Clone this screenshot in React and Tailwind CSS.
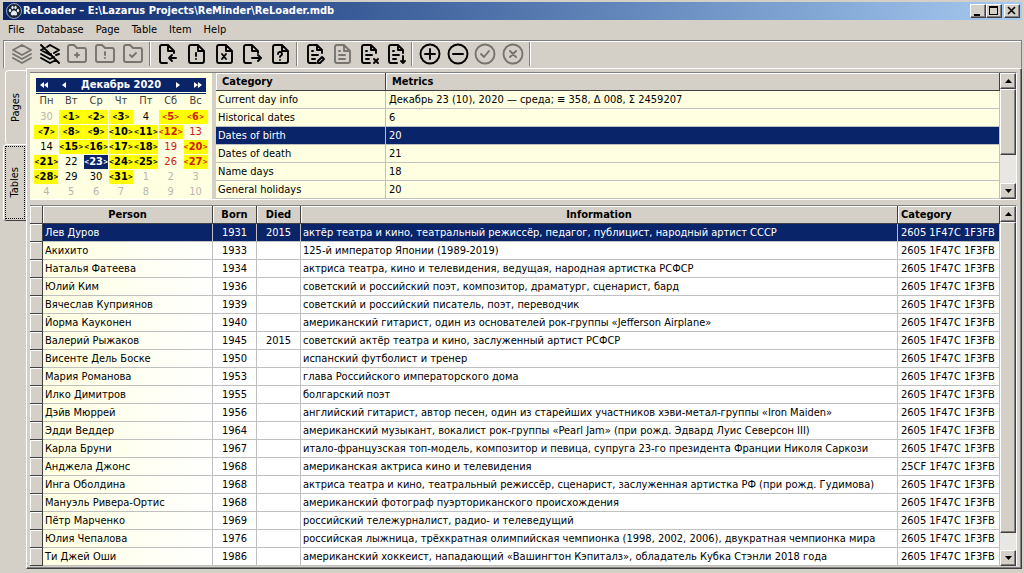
import React from 'react';
import clsx from 'clsx';

const WEEK_DAYS = ['Пн', 'Вт', 'Ср', 'Чт', 'Пт', 'Сб', 'Вс'];

// m = day has marked events, o = day belongs to another month
const WEEKS = [
  ['30o', '1m', '2m', '3m', '4', '5m', '6m'],
  ['7m', '8m', '9m', '10m', '11m', '12m', '13'],
  ['14', '15m', '16m', '17m', '18m', '19', '20m'],
  ['21m', '22', '23m', '24m', '25m', '26', '27m'],
  ['28m', '29', '30', '31m', '1o', '2o', '3o'],
  ['4o', '5o', '6o', '7o', '8o', '9o', '10o'],
];

const METRICS = [
  ['Current day info', 'Декабрь 23 (10), 2020 — среда; ≡ 358, Δ 008, Σ 2459207'],
  ['Historical dates', '6'],
  ['Dates of birth', '20'],
  ['Dates of death', '21'],
  ['Name days', '18'],
  ['General holidays', '20'],
];

const PEOPLE = [
  ['Лев Дуров', '1931', '2015', 'актёр театра и кино, театральный режиссёр, педагог, публицист, народный артист СССР'],
  ['Акихито', '1933', '', '125-й император Японии (1989-2019)'],
  ['Наталья Фатеева', '1934', '', 'актриса театра, кино и телевидения, ведущая, народная артистка РСФСР'],
  ['Юлий Ким', '1936', '', 'советский и российский поэт, композитор, драматург, сценарист, бард'],
  ['Вячеслав Куприянов', '1939', '', 'советский и российский писатель, поэт, переводчик'],
  ['Йорма Кауконен', '1940', '', 'американский гитарист, один из основателей рок-группы «Jefferson Airplane»'],
  ['Валерий Рыжаков', '1945', '2015', 'советский актёр театра и кино, заслуженный артист РСФСР'],
  ['Висенте Дель Боске', '1950', '', 'испанский футболист и тренер'],
  ['Мария Романова', '1953', '', 'глава Российского императорского дома'],
  ['Илко Димитров', '1955', '', 'болгарский поэт'],
  ['Дэйв Мюррей', '1956', '', 'английский гитарист, автор песен, один из старейших участников хэви-метал-группы «Iron Maiden»'],
  ['Эдди Веддер', '1964', '', 'американский музыкант, вокалист рок-группы «Pearl Jam» (при рожд. Эдвард Луис Северсон III)'],
  ['Карла Бруни', '1967', '', 'итало-французская топ-модель, композитор и певица, супруга 23-го президента Франции Николя Саркози'],
  ['Анджела Джонс', '1968', '', 'американская актриса кино и телевидения', '25CF 1F47C 1F3FB'],
  ['Инга Оболдина', '1968', '', 'актриса театра и кино, театральный режиссёр, сценарист, заслуженная артистка РФ (при рожд. Гудимова)'],
  ['Мануэль Ривера-Ортис', '1968', '', 'американский фотограф пуэрториканского происхождения'],
  ['Пётр Марченко', '1969', '', 'российский тележурналист, радио- и телеведущий'],
  ['Юлия Чепалова', '1976', '', 'российская лыжница, трёхкратная олимпийская чемпионка (1998, 2002, 2006), двукратная чемпионка мира'],
  ['Ти Джей Оши', '1986', '', 'американский хоккеист, нападающий «Вашингтон Кэпиталз», обладатель Кубка Стэнли 2018 года'],
];

const FOLDER = 'M5 3h4l3 3h7a2 2 0 0 1 2 2v10a2 2 0 0 1-2 2H5a2 2 0 0 1-2-2V5a2 2 0 0 1 2-2z';
const FILE = 'M14 3H7a2 2 0 0 0-2 2v14a2 2 0 0 0 2 2h11a2 2 0 0 0 2-2V9zM14 3v6h6';
const FILE_OPEN = 'M18 11V9l-6-6H6a2 2 0 0 0-2 2v14a2 2 0 0 0 2 2h5M12 3v6h6';
const FILE_LINES = 'M19 11V8l-5-5H7a2 2 0 0 0-2 2v14a2 2 0 0 0 2 2h6M14 3v5h5M9 9h1M9 13h6M9 17h3';
const CIRCLE = 'M12 2.500a9.500 9.500 0 1 0 0 19 9.500 9.500 0 1 0 0-19z';

const TOOL_GROUPS = [
  [
    { name: 'Open database', off: true, d: 'M12 3 3 8l9 5 9-5zM3 12l9 5 9-5M3 16l9 5 9-5' },
    { name: 'Close database', d: 'M9 5l3-2 9 5-5 3M7 6 3 8l9 5 1-1M3 12l9 5 4-2M18 13l3-1M3 16l9 5 6-3M3 3l18 18' },
    { name: 'Add page', off: true, d: FOLDER + 'M12 11v4M10 13h4' },
    { name: 'Page properties', off: true, d: FOLDER + 'M12 10v3M12 16v.1' },
    { name: 'Apply page', off: true, d: FOLDER + 'M9 13l2 2 4-4' },
  ],
  [
    { name: 'Import table', d: FILE_OPEN + 'M20 16h-7M16 13l-3 3 3 3' },
    { name: 'Table properties', d: FILE + 'M12 11v3M12 17v.1' },
    { name: 'Delete table', d: FILE + 'M10 12l4 5M14 12l-4 5' },
    { name: 'Export table', d: FILE_OPEN + 'M12 16h8M18 13l3 3-3 3' },
    { name: 'Query table', d: FILE + 'M10 12a2 2 0 1 1 3 1.700q-1 .500-1 1.300M12 18v.1' },
  ],
  [
    { name: 'Edit item', d: FILE_LINES + 'M15 19l4-4 2 2-4 4h-2z' },
    { name: 'View item', off: true, d: FILE + 'M9 9h1M9 13h6M9 17h6' },
    { name: 'Remove item', d: FILE_LINES + 'M17 17l4 4M21 17l-4 4' },
    { name: 'Save item', d: FILE_LINES + 'M19 14v7M17 19l2 2 2-2' },
  ],
  [
    { name: 'Insert', d: CIRCLE + 'M12 7v10M7 12h10' },
    { name: 'Delete', d: CIRCLE + 'M7 12h10' },
    { name: 'Post', off: true, d: CIRCLE + 'M8 12l3 3 5-6' },
    { name: 'Cancel', off: true, d: CIRCLE + 'M9 9l6 6M15 9l-6 6' },
  ],
];

const RAISED = 'border border-t-white border-l-white border-r-[#404040] border-b-[#404040] bg-[#d4d0c8] shadow-[inset_-1px_-1px_0_#808080]';
const HEAD = 'h-[18px] border-r border-b border-[#404040] bg-[#d4d0c8] py-0 leading-4 font-bold shadow-[inset_1px_1px_0_#fff]';
const CELL = 'h-[18px] border-r border-b border-[#c0c0c0] py-0 leading-4 whitespace-nowrap';

const ToolButton = ({ tool }) => (
  <button type="button" aria-label={tool.name} disabled={tool.off} className={clsx('flex flex-1 items-center justify-center', tool.off ? 'text-[#77756f]' : 'text-black')}>
    <svg viewBox="0 0 24 24" className="size-6" fill="none" stroke="currentColor" strokeWidth="1.900" strokeLinecap="round" strokeLinejoin="round">
      <path d={tool.d} />
    </svg>
  </button>
);

const TitleBar = () => (
  <header className="flex h-[18px] items-center gap-px bg-linear-to-r from-[#0a246a] to-[#a6caf0] pr-0.5 pl-[3px]">
    <svg viewBox="0 0 16 16" className="size-4">
      <circle cx="8" cy="8" r="7.500" fill="#1b2430" stroke="#8fa3c4" />
      <g fill="#e8edf5">
        <ellipse cx="4" cy="7.500" rx="1.200" ry="1.700" />
        <ellipse cx="6.500" cy="4.500" rx="1.200" ry="1.800" />
        <ellipse cx="9.500" cy="4.500" rx="1.200" ry="1.800" />
        <ellipse cx="12" cy="7.500" rx="1.200" ry="1.700" />
        <path d="M8 7.500c2 0 3.500 2.500 3 4s-2 .700-3 .700-2.500.800-3-.700 1-4 3-4z" />
      </g>
    </svg>
    <h1 className="flex-1 text-[11px] leading-4 font-bold text-white">ReLoader – E:\Lazarus Projects\ReMinder\ReLoader.mdb</h1>
    <div className="flex">
      <button type="button" aria-label="Minimize" className={clsx(RAISED, 'h-3.5 w-4')}>
        <svg viewBox="0 0 14 12" className="h-3 w-3.5"><path d="M3 9h6v2H3z" /></svg>
      </button>
      <button type="button" aria-label="Maximize" className={clsx(RAISED, 'h-3.5 w-4')}>
        <svg viewBox="0 0 14 12" className="h-3 w-3.5"><path fillRule="evenodd" d="M2 1h9v9H2zM3 3v6h7V3z" /></svg>
      </button>
      <button type="button" aria-label="Close" className={clsx(RAISED, 'ml-0.5 h-3.5 w-4')}>
        <svg viewBox="0 0 14 12" className="h-3 w-3.5"><path d="M3 2l7 7M10 2l-7 7" stroke="#000" strokeWidth="1.600" /></svg>
      </button>
    </div>
  </header>
);

const ScrollBar = ({ label, thumb }) => (
  <div className="flex w-4 shrink-0 flex-col bg-[#e9e7e3]">
    <button type="button" aria-label={`${label}: scroll up`} className={clsx(RAISED, 'flex h-4 items-center justify-center')}>
      <svg viewBox="0 0 7 4" className="h-1 w-[7px]"><path d="M3.500 0 7 4H0z" /></svg>
    </button>
    <div className="flex flex-1 flex-col">
      <div className={clsx(RAISED, thumb)} />
    </div>
    <button type="button" aria-label={`${label}: scroll down`} className={clsx(RAISED, 'flex h-4 items-center justify-center')}>
      <svg viewBox="0 0 7 4" className="h-1 w-[7px]"><path d="M0 0h7L3.500 4z" /></svg>
    </button>
  </div>
);

const Day = ({ code, weekend }) => {
  const day = parseInt(code, 10);
  const marked = code.endsWith('m');
  const other = code.endsWith('o');
  const selected = day === 23;
  return (
    <td className="h-[15px] p-0">
      <button
        type="button"
        className={clsx(
          'mx-auto flex h-3.5 w-6 items-center justify-center leading-3',
          marked && 'font-bold',
          marked && (selected ? 'bg-[#0a246a]' : 'bg-[#ffff00]'),
          selected ? 'text-white' : other ? 'text-[#b8b8b0]' : weekend ? 'text-[#d02010]' : 'text-black'
        )}
      >
        {marked && <span className="text-[7px]">&lt;</span>}
        {day}
        {marked && <span className="text-[7px]">&gt;</span>}
      </button>
    </td>
  );
};

const Calendar = () => (
  <section className="w-[182px] shrink-0 bg-[#ffffe1] px-1 pt-[5px]">
    <div className="mx-0.5 flex h-3.5 items-center justify-between bg-[#0a246a] px-1 text-white">
      <button type="button" aria-label="Previous year"><svg viewBox="0 0 8 6" className="h-1.5 w-2 fill-white"><path d="M4 0v6L0 3zM8 0v6L4 3z" /></svg></button>
      <button type="button" aria-label="Previous month"><svg viewBox="0 0 4 6" className="h-1.5 w-1 fill-white"><path d="M4 0v6L0 3z" /></svg></button>
      <h2 className="text-[11px] leading-3.5 font-bold">Декабрь 2020</h2>
      <button type="button" aria-label="Next month"><svg viewBox="0 0 4 6" className="h-1.5 w-1 fill-white"><path d="M0 0v6l4-3z" /></svg></button>
      <button type="button" aria-label="Next year"><svg viewBox="0 0 8 6" className="h-1.5 w-2 fill-white"><path d="M0 0v6l4-3zM4 0v6l4-3z" /></svg></button>
    </div>
    <div className="mx-0.5 mt-px h-px bg-[#0a246a]" />
    <table className="w-full table-fixed border-separate border-spacing-0 text-center">
      <thead>
        <tr>
          {WEEK_DAYS.map(d => <th key={d} className="h-[15px] p-0 align-top leading-3.5 font-normal text-[#404040]">{d}</th>)}
        </tr>
      </thead>
      <tbody>
        {WEEKS.map((week, i) => (
          <tr key={i}>
            {week.map((code, j) => <Day key={code} code={code} weekend={j > 4} />)}
          </tr>
        ))}
      </tbody>
    </table>
  </section>
);

const MetricsTable = () => (
  <table className="w-full table-fixed border-separate border-spacing-0 bg-[#ffffe1]">
    <colgroup>
      <col className="w-[170px]" />
      <col />
    </colgroup>
    <thead>
      <tr className="text-left">
        <th className={clsx(HEAD, 'px-1.5')}>Category</th>
        <th className={clsx(HEAD, 'px-1.5')}>Metrics</th>
      </tr>
    </thead>
    <tbody>
      {METRICS.map(([name, value], i) => (
        <tr key={name} className={clsx(i === 2 && 'bg-[#0a246a] text-white')}>
          <td className={clsx(CELL, 'px-0.5')}>{name}</td>
          <td className={clsx(CELL, 'px-[3px]')}>{value}</td>
        </tr>
      ))}
    </tbody>
  </table>
);

const PeopleTable = () => (
  <table className="w-full table-fixed border-separate border-spacing-0 bg-white">
    <colgroup>
      <col className="w-[13px]" />
      <col className="w-[170px]" />
      <col className="w-11" />
      <col className="w-11" />
      <col />
      <col className="w-[102px]" />
    </colgroup>
    <thead>
      <tr>
        <th className={HEAD} aria-label="Row marker" />
        <th className={HEAD}>Person</th>
        <th className={HEAD}>Born</th>
        <th className={HEAD}>Died</th>
        <th className={HEAD}>Information</th>
        <th className={clsx(HEAD, 'px-[3px] text-left')}>Category</th>
      </tr>
    </thead>
    <tbody>
      {PEOPLE.map(([name, born, died, info, code = '2605 1F47C 1F3FB'], i) => (
        <tr key={name} className={clsx(i === 0 && 'bg-[#0a246a] text-white')}>
          <td className={HEAD} />
          <td className={clsx(CELL, 'px-0.5', i > 0 && 'bg-linear-to-r from-[#ffffe1] to-white')}>{name}</td>
          <td className={clsx(CELL, 'text-center')}>{born}</td>
          <td className={clsx(CELL, 'text-center')}>{died}</td>
          <td className={clsx(CELL, 'overflow-hidden px-0.5')}>{info}</td>
          <td className={clsx(CELL, 'px-[3px]')}>{code}</td>
        </tr>
      ))}
    </tbody>
  </table>
);

const TAB = 'flex items-center justify-center rounded-l-sm border-t border-l border-white';
const GROUP_WIDTHS = ['w-[146px]', 'w-[147px]', 'w-[115px]', 'w-[118px]'];

const App = () => (
  <div className="flex min-h-screen flex-col border-b border-[#808080] bg-[#d4d0c8] pt-0.5 pr-0.5 pl-[3px] font-['DejaVu_Sans_Condensed','DejaVu_Sans',sans-serif] text-[11px] text-black">
    <TitleBar />
    <nav className="flex h-5 items-center gap-3 px-[5px] leading-4">
      {['File', 'Database', 'Page', 'Table', 'Item', 'Help'].map(item => (
        <button key={item} type="button">{item}</button>
      ))}
    </nav>
    <div role="toolbar" className="flex h-7 items-start border-t border-r border-l border-[#808080] pt-px shadow-[inset_1px_1px_0_#fff]">
      {TOOL_GROUPS.map((group, i) => (
        <div key={i} className={clsx('flex h-6 items-center border-r border-[#808080] pr-0.5 pl-1 shadow-[1px_0_0_#fff]', GROUP_WIDTHS[i])}>
          {group.map(tool => <ToolButton key={tool.name} tool={tool} />)}
        </div>
      ))}
    </div>

    <div className="flex flex-1 pb-1">
      <div role="tablist" className="flex w-[23px] shrink-0 flex-col pt-0.5">
        <button type="button" role="tab" aria-selected="false" className={clsx(TAB, 'ml-0.5 h-[74px]')}>
          <span className="rotate-180 [writing-mode:vertical-rl]">Pages</span>
        </button>
        <button type="button" role="tab" aria-selected="true" className={clsx(TAB, 'h-[77px] border-b border-b-[#404040] p-px')}>
          <span className="flex size-full items-center justify-center border border-dotted border-black">
            <span className="rotate-180 [writing-mode:vertical-rl]">Tables</span>
          </span>
        </button>
      </div>

      <main className="flex min-w-0 flex-1 flex-col gap-[5px] border border-t-white border-r-[#404040] border-b-[#404040] border-l-white pt-[3px] pr-1 pb-0.5 pl-[3px] shadow-[inset_-1px_-1px_0_#808080]">
        <div className="flex gap-1 border-t border-r border-b border-t-[#808080] border-r-white border-b-white">
          <Calendar />
          <div className="flex min-w-0 flex-1">
            <div className="min-w-0 flex-1"><MetricsTable /></div>
            <ScrollBar label="Metrics" thumb="h-[66px]" />
          </div>
        </div>
        <div className="flex flex-1 border-t border-r border-t-[#808080] border-r-white">
          <div className="min-w-0 flex-1"><PeopleTable /></div>
          <ScrollBar label="People" thumb="h-[311px]" />
        </div>
      </main>
    </div>
  </div>
);

export default App;
